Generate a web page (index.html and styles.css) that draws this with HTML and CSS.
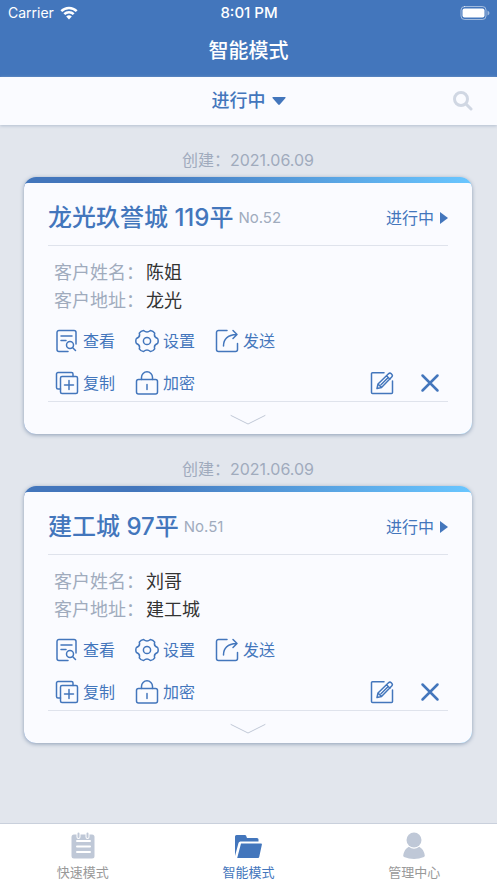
FILE: index.html
```html
<!DOCTYPE html>
<html lang="zh-CN">
<head>
<meta charset="utf-8">
<meta name="viewport" content="width=device-width, initial-scale=1">
<title>智能模式</title>
<link rel="stylesheet" href="styles.css">
</head>
<body>
<svg class="sprite" aria-hidden="true">
  <symbol id="view" viewBox="0 0 24 24"><path d="M13 22.500H4a2 2 0 0 1-2-2V3.500a2 2 0 0 1 2-2h15a2 2 0 0 1 2 2V15M6 7h11M6 11.500h5"/><circle cx="15" cy="16" r="3.500"/><path d="M17.500 18.500l3 3"/></symbol>
  <symbol id="gear" viewBox="0 0 24 24"><path d="M22.600 14.500Q18.500 15.800 19.700 19.800Q18.200 22.200 15.400 22.500Q12 19.500 8.600 22.500Q5.800 22.200 4.300 19.800Q5.500 15.800 1.400 14.500Q.2 12 1.400 9.500Q5.500 8.200 4.300 4.200Q5.800 1.800 8.600 1.500Q12 4.500 15.400 1.500Q18.200 1.800 19.700 4.200Q18.500 8.200 22.600 9.500Q23.800 12 22.600 14.500Z"/><circle cx="12" cy="12" r="3.600"/></symbol>
  <symbol id="send" viewBox="0 0 24 24"><path d="M12 1.500H3.500a2 2 0 0 0-2 2v17a2 2 0 0 0 2 2h17a2 2 0 0 0 2-2v-6M8.500 17C8.500 10 12.500 6 21.500 5.500M18 1.500l4 4L18 9.500"/></symbol>
  <symbol id="copy" viewBox="0 0 24 24"><path d="M5.500 18H3a1.500 1.500 0 0 1-1.500-1.500V3A1.500 1.500 0 0 1 3 1.500h13.500A1.500 1.500 0 0 1 18 3v2.500"/><rect x="5.500" y="5.500" width="17" height="17" rx="1.500"/><path d="M14 9.500v9M9.500 14h9"/></symbol>
  <symbol id="lock" viewBox="0 0 24 24"><rect x="1.500" y="8.500" width="21" height="14.500" rx="2"/><path d="M6.500 8.500V6.300a5.500 5.500 0 0 1 11 0v2.200M12 13.500v5"/></symbol>
  <symbol id="edit" viewBox="0 0 24 24"><path d="M14 1.800H2.500a1 1 0 0 0-1 1v18.700a1 1 0 0 0 1 1h19a1 1 0 0 0 1-1V10"/><path d="M7 17.500l1-4.500L18.500 2.800a2 2 0 0 1 2.800 0l.4.400a2 2 0 0 1 0 2.800L11.500 16.500zM8 13l3.500 3.500M16.500 4.800L20 8.200M11 13.800l6.500-6.500"/></symbol>
  <symbol id="close" viewBox="0 0 24 24"><path d="M4.500 4.500l15 15M19.500 4.500l-15 15"/></symbol>
  <symbol id="chevron" viewBox="0 0 36 12"><path d="M1 1.500l17 8.500 17-8.500"/></symbol>
</svg>

<header class="header">
  <div class="status">
    <div class="carrier">Carrier
      <svg class="wifi" viewBox="0 0 18 14"><path d="M1.300 5.200a11 11 0 0 1 15.400 0M4.300 8.200a6.700 6.700 0 0 1 9.400 0"/><path class="dot" d="M9 13.500L6.200 10.600a4 4 0 0 1 5.600 0z"/></svg>
    </div>
    <div class="clock">8:01 PM</div>
    <svg class="battery" viewBox="0 0 30 14"><rect class="shell" x="1" y=".5" width="25" height="13" rx="3.500"/><rect class="charge" x="2.500" y="2.500" width="22" height="9" rx="2"/><path class="charge tip" d="M27.500 4.500q2 1 2 2.500t-2 2.500z"/></svg>
  </div>
  <h1 class="title">智能模式</h1>
</header>

<div class="filter">
  <div class="picker">
    <select class="state-select" aria-label="状态"><option>进行中</option></select>
    <svg class="down" viewBox="0 0 14 8"><path d="M1 0h12q1 0 .5 1L7.800 7.500q-.8.800-1.600 0L.5 1Q0 0 1 0z"/></svg>
  </div>
  <button class="search" type="button" aria-label="搜索"><svg viewBox="0 0 20 20"><circle cx="8" cy="8" r="6.500"/><path d="M13 13l5 5"/></svg></button>
</div>

<main class="list">
  <p class="date">创建：2021.06.09</p>
  <article class="card">
    <div class="inner">
      <div class="head">
        <h2 class="name">龙光玖誉城 119平</h2><span class="number">No.52</span>
        <button class="state" type="button">进行中<svg viewBox="0 0 8 12"><path d="M0 0l8 6-8 6z"/></svg></button>
      </div>
      <dl class="info">
        <div><dt>客户姓名：</dt><dd>陈姐</dd></div>
        <div><dt>客户地址：</dt><dd>龙光</dd></div>
      </dl>
      <div class="actions">
        <button type="button"><svg><use href="#view"/></svg>查看</button>
        <button type="button"><svg><use href="#gear"/></svg>设置</button>
        <button type="button"><svg><use href="#send"/></svg>发送</button>
        <button type="button"><svg><use href="#copy"/></svg>复制</button>
        <button type="button"><svg><use href="#lock"/></svg>加密</button>
        <div class="tools">
          <button type="button" aria-label="编辑"><svg><use href="#edit"/></svg></button>
          <button class="remove" type="button" aria-label="删除"><svg><use href="#close"/></svg></button>
        </div>
      </div>
      <button class="expand" type="button" aria-label="展开"><svg><use href="#chevron"/></svg></button>
    </div>
  </article>

  <p class="date">创建：2021.06.09</p>
  <article class="card">
    <div class="inner">
      <div class="head">
        <h2 class="name">建工城 97平</h2><span class="number">No.51</span>
        <button class="state" type="button">进行中<svg viewBox="0 0 8 12"><path d="M0 0l8 6-8 6z"/></svg></button>
      </div>
      <dl class="info">
        <div><dt>客户姓名：</dt><dd>刘哥</dd></div>
        <div><dt>客户地址：</dt><dd>建工城</dd></div>
      </dl>
      <div class="actions">
        <button type="button"><svg><use href="#view"/></svg>查看</button>
        <button type="button"><svg><use href="#gear"/></svg>设置</button>
        <button type="button"><svg><use href="#send"/></svg>发送</button>
        <button type="button"><svg><use href="#copy"/></svg>复制</button>
        <button type="button"><svg><use href="#lock"/></svg>加密</button>
        <div class="tools">
          <button type="button" aria-label="编辑"><svg><use href="#edit"/></svg></button>
          <button class="remove" type="button" aria-label="删除"><svg><use href="#close"/></svg></button>
        </div>
      </div>
      <button class="expand" type="button" aria-label="展开"><svg><use href="#chevron"/></svg></button>
    </div>
  </article>
</main>

<nav class="tabs">
  <a class="tab" href="#quick"><svg viewBox="0 0 28 28"><rect x="2.500" y="2.500" width="23" height="24" rx="2.500"/><path class="lines" d="M8 9h13M8 14.500h13M8 20h13"/><path class="ring-gap" d="M9.500 1.500v3.500M18.500 1.500v3.500"/><path class="ring" d="M9.500 1.500v3.500M18.500 1.500v3.500"/></svg>快速模式</a>
  <a class="tab active" href="#smart" aria-current="page"><svg viewBox="0 0 28 28"><path d="M1 24V4.500a1.500 1.500 0 0 1 1.500-1.500h8.500a1.500 1.500 0 0 1 1.400 1.500L13 6h10a1.500 1.500 0 0 1 1.500 1.500V9.500H6.500a2 2 0 0 0-2 1.500zM7 11.500h20.200q.8 0 .7.900l-2.700 12.600q-.2 1-1.200 1H3.200z"/></svg>智能模式</a>
  <a class="tab" href="#manage"><svg viewBox="0 0 28 28"><circle cx="14" cy="8" r="7.500"/><path d="M8.800 14.700a8.600 8.600 0 0 0 10.400 0q4.600 2.300 5.600 8.800 0 1-.8 1.400-10 4.200-20 0-.8-.4-.8-1.400 1-6.500 5.600-8.800z"/></svg>管理中心</a>
</nav>
</body>
</html>
```
FILE: styles.css
```css
:root {
  --blue: #4376bc;
  --surface: #fafbff;
  --muted: #a0abbd;
  --line: #dfe3ec;
}

* {
  box-sizing: border-box;
}

body {
  margin: 0;
  min-height: 100vh;
  display: flex;
  flex-direction: column;
  background: #e2e6ed;
  font-family: Inter, "Noto Sans CJK SC", sans-serif;
  font-size: 16px;
  line-height: 24px;
}

h1, h2, p, dl, dd {
  margin: 0;
}

button {
  display: flex;
  align-items: center;
  padding: 0;
  border: 0;
  background: none;
  color: var(--blue);
  font: inherit;
}

svg {
  display: block;
  flex: none;
  fill: none;
  stroke: currentColor;
  stroke-linecap: round;
  stroke-linejoin: round;
}

.sprite {
  position: absolute;
  width: 0;
  height: 0;
}

.header {
  height: 77px;
  background: var(--blue);
  color: #fff;
}

.status {
  display: grid;
  grid-template-columns: 1fr auto 1fr;
  align-items: center;
  height: 25px;
  padding: 0 7px 0 8px;
  font-size: 14px;
}

.carrier {
  display: flex;
  align-items: center;
  gap: 6px;
}

.wifi {
  width: 18px;
  height: 14px;
  stroke-width: 2.5;
  stroke-linecap: butt;
}

.wifi .dot {
  fill: #fff;
  stroke: none;
}

.clock {
  font-size: 15px;
  font-weight: 500;
}

.battery {
  justify-self: end;
  width: 30px;
  height: 14px;
}

.shell {
  opacity: .5;
}

.charge {
  fill: #fff;
  stroke: none;
}

.tip {
  opacity: .5;
}

.title {
  padding-top: 10px;
  font-size: 20px;
  line-height: 32px;
  font-weight: 500;
  text-align: center;
}

.filter {
  display: grid;
  grid-template-columns: 1fr auto 1fr;
  align-items: center;
  height: 48px;
  padding: 0 24px;
  background: var(--surface);
  box-shadow: 0 1px 3px #b4bfd0;
}

.picker {
  grid-column: 2;
  display: flex;
  align-items: center;
  gap: 6px;
  color: var(--blue);
}

.state-select {
  appearance: none;
  padding: 0;
  border: 0;
  background: none;
  color: inherit;
  font: inherit;
  font-size: 18px;
  font-weight: 500;
}

.down {
  width: 14px;
  height: 8px;
  fill: currentColor;
  stroke: none;
}

.search {
  justify-self: end;
  color: #d0d7e3;
}

.search svg {
  width: 20px;
  height: 20px;
  stroke-width: 3;
}

.list {
  flex: 1;
  padding: 18px 25px 24px 24px;
}

.date {
  padding-top: 5px;
  height: 34px;
  color: var(--muted);
  text-align: center;
}

.card {
  margin-bottom: 18px;
  padding-top: 6px;
  border-radius: 12px;
  overflow: hidden;
  background: linear-gradient(90deg, #4376bc 25%, #69c6ff);
  box-shadow: 0 1px 4px #8c9db5;
}

.inner {
  padding: 0 24px;
  border-radius: 4px 4px 0 0;
  background: var(--surface);
}

.head {
  display: flex;
  align-items: center;
  height: 63px;
  padding-top: 7px;
  border-bottom: 1px solid var(--line);
}

.name {
  color: var(--blue);
  font-size: 24px;
  font-weight: 500;
}

.number {
  margin-left: 5px;
  color: var(--muted);
  font-size: 15px;
}

.state {
  gap: 6px;
  margin-left: auto;
}

.state svg {
  width: 8px;
  height: 12px;
  fill: currentColor;
  stroke: none;
}

.info {
  padding: 13px 6px 5px;
  font-size: 18px;
  line-height: 28px;
}

.info div {
  display: flex;
  gap: 2px;
}

.info dt {
  color: var(--muted);
}

.info dd {
  color: #333;
}

.actions {
  display: grid;
  grid-template-columns: 80px 80px 1fr;
  grid-auto-rows: 24px;
  align-items: center;
  row-gap: 18px;
  padding: 9px 6px 6px 7px;
}

.actions button {
  gap: 4px;
}

.actions svg {
  width: 24px;
  height: 24px;
  stroke-width: 1.5;
}

.tools {
  display: flex;
  justify-content: flex-end;
  gap: 24px;
}

.actions .remove svg {
  stroke-width: 2.5;
}

.expand {
  justify-content: center;
  width: 100%;
  height: 33px;
  padding-top: 3px;
  border-top: 1px solid var(--line);
  color: #c0c8d6;
}

.expand svg {
  width: 36px;
  height: 12px;
}

.tabs {
  display: grid;
  grid-template-columns: repeat(3, 1fr);
  height: 60px;
  border-top: 1px solid #c9d0dc;
  background: #fff;
}

.tab {
  display: flex;
  flex-direction: column;
  align-items: center;
  padding-top: 8px;
  color: #999;
  font-size: 13px;
  text-decoration: none;
}

.tab svg {
  width: 28px;
  height: 28px;
  fill: #bfc8d7;
  stroke: none;
}

.tab .lines {
  fill: none;
  stroke: #fff;
  stroke-width: 2;
}

.ring-gap {
  stroke: #fff;
  stroke-width: 4;
}

.ring {
  stroke: #bfc8d7;
  stroke-width: 2;
}

.active {
  color: var(--blue);
}

.tab.active svg {
  fill: currentColor;
}
```
